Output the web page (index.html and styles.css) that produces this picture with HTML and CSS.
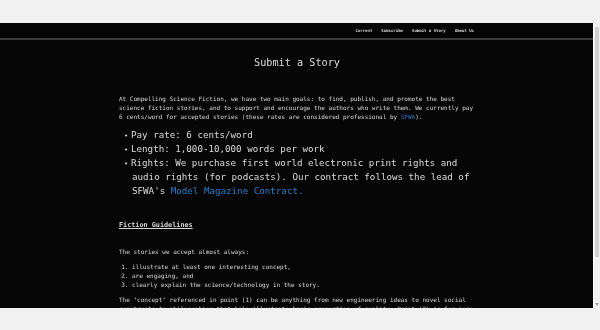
FILE: index.html
```html
<!DOCTYPE html>
<html lang="en">
<head>
<meta charset="utf-8">
<title>Submit a Story</title>
<link rel="stylesheet" href="styles.css">
</head>
<body>
<div class="window">
  <div class="viewport">
    <header class="topbar">
      <nav class="nav">
        <a href="#">Current</a>
        <a href="#">Subscribe</a>
        <a href="#">Submit a Story</a>
        <a href="#">About Us</a>
      </nav>
    </header>
    <main class="content">
      <h1 class="title">Submit a Story</h1>
      <p class="text intro">At Compelling Science Fiction, we have two main goals: to find, publish, and promote the best science fiction stories, and to support and encourage the authors who write them. We currently pay 6 cents/word for accepted stories (these rates are considered professional by <a class="link" href="#">SFWA</a>).</p>
      <ul class="terms">
        <li>Pay rate: 6 cents/word</li>
        <li>Length: 1,000-10,000 words per work</li>
        <li>Rights: We purchase first world electronic print rights and audio rights (for podcasts). Our contract follows the lead of SFWA's <a class="link" href="#">Model Magazine Contract.</a></li>
      </ul>
      <h2 class="subhead">Fiction Guidelines</h2>
      <p class="text lead">The stories we accept almost always:</p>
      <ol class="points">
        <li>illustrate at least one interesting concept,</li>
        <li>are engaging, and</li>
        <li>clearly explain the science/technology in the story.</li>
      </ol>
      <p class="text after">The ‘concept’ referenced in point (1) can be anything from new engineering ideas to novel social constructs to philosophies that help illustrate basic properties of reality. Point (2) is for more</p>
    </main>
  </div>
  <div class="scrollbar"><div class="thumb"></div><div class="arrow"></div></div>
</div>
</body>
</html>
```

FILE: styles.css
```css
html, body {
  margin: 0;
  padding: 0;
}
body {
  background: #f1f1f1;
  width: 600px;
  height: 330px;
  overflow: hidden;
  padding-top: 23px;
  box-sizing: border-box;
  font-family: "DejaVu Sans Mono", "Liberation Mono", monospace;
  -webkit-font-smoothing: antialiased;
}
.window {
  display: flex;
  height: 285px;
}
.viewport {
  flex: 1;
  background: #060606;
  overflow: hidden;
  color: #d8d8d8;
}
.topbar {
  height: 15px;
  border-bottom: 2px solid #3c3c3c;
  display: flex;
  justify-content: flex-end;
  align-items: center;
  padding-right: 119px;
  will-change: transform;
}
.nav {
  display: flex;
  gap: 9px;
  font-size: 4px;
  line-height: 6px;
  font-weight: bold;
}
.nav a {
  color: #d4d4d4;
  text-decoration: none;
}
.content {
  width: 356px;
  margin: 0 auto;
  padding-left: 1px;
  will-change: transform;
}
.title {
  margin: 16px 0 0;
  font-size: 10.2px;
  line-height: 14px;
  font-weight: normal;
  text-align: center;
  color: #dedede;
}
.text {
  font-size: 6px;
  line-height: 9px;
  margin: 0;
}
.intro {
  margin-top: 24px;
}
.link {
  color: #2e7ccc;
  text-decoration: none;
}
.terms {
  margin: 7px 0 0;
  padding-left: 13px;
  font-size: 9.2px;
  line-height: 14px;
  color: #dcdcdc;
  list-style: none;
}
.terms li::before {
  content: "•";
  display: inline-block;
  width: 7px;
  margin-left: -8px;
  font-size: 7px;
  line-height: 0;
}
.subhead {
  margin: 23px 0 0;
  font-size: 6.8px;
  line-height: 9px;
  font-weight: bold;
  text-decoration: underline;
}
.lead {
  margin-top: 17px;
}
.points {
  margin: 6px 0 0;
  padding-left: 13px;
  font-size: 6px;
  line-height: 9px;
}
.after {
  margin-top: 6px;
}
.scrollbar {
  width: 6px;
  background: #f1f1f1;
  border-left: 1px solid #ffffff;
  position: relative;
}
.thumb {
  margin: 4px 1px 0;
  height: 230px;
  background: #d0d0d0;
}
.arrow {
  position: absolute;
  bottom: 2px;
  left: 1px;
  width: 0;
  height: 0;
  border-left: 2px solid transparent;
  border-right: 2px solid transparent;
  border-top: 3px solid #a0a0a0;
}
```
